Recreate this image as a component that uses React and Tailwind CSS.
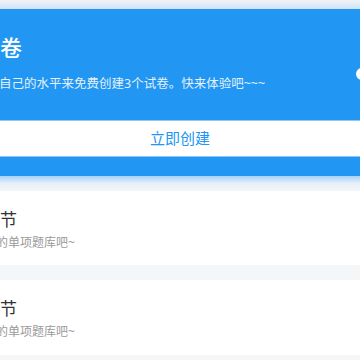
export default function App() {
  const font = { fontFamily: '"Noto Sans", "Noto Sans CJK SC", sans-serif' };
  return (
    <div className="relative w-[360px] h-[360px] overflow-hidden bg-[#f5f6f7]" style={font}>
      <div className="h-[9px] bg-gradient-to-b from-[#f1f4f8] to-[#cfe3f7]" />
      <div className="bg-[#2196f3] pt-[23px] h-[112px]">
        <div className="-ml-[22px] text-[22px] leading-[30px] font-medium text-white whitespace-nowrap">试卷</div>
        <div className="-ml-[26px] mt-[13px] text-[12.5px] leading-[18px] text-[#e3f1fd] whitespace-nowrap">根据自己的水平来免费创建3个试卷。快来体验吧~~~</div>
      </div>
      <div className="h-[37px] bg-white border-y border-[#8fc6f7] flex items-center justify-center text-[15px] text-[#2196f3] -mt-px">
        立即创建
      </div>
      <div className="h-[19px] bg-[#2196f3]" />
      <div className="h-[15px] bg-gradient-to-b from-[#a7d1f7] via-[#e6f0fa] to-[#f5f6f7]" />
      <div className="flex flex-col gap-[15px]">
        <div className="h-[74px] bg-white pt-[17px]">
          <div className="-ml-[34px] text-[17px] leading-[24px] text-[#333333] whitespace-nowrap">章节节</div>
          <div className="-ml-[28px] mt-[3px] text-[12px] leading-[16px] text-[#9a9a9a] whitespace-nowrap">练习的单项题库吧~</div>
        </div>
        <div className="h-[75px] bg-white pt-[17px]">
          <div className="-ml-[34px] text-[17px] leading-[24px] text-[#333333] whitespace-nowrap">章节节</div>
          <div className="-ml-[28px] mt-[3px] text-[12px] leading-[16px] text-[#9a9a9a] whitespace-nowrap">练习的单项题库吧~</div>
        </div>
      </div>
      <div className="absolute left-[356px] top-[68px] w-[12px] h-[12px] rounded-full bg-white" />
    </div>
  );
}
